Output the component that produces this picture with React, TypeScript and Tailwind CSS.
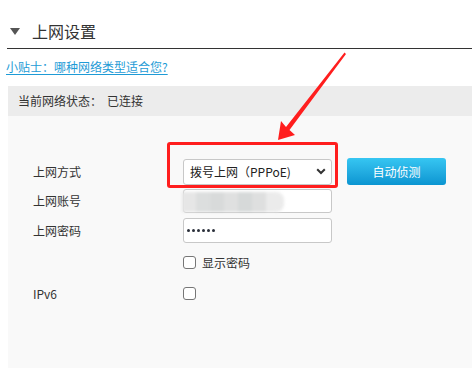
import React from "react";

export default function App() {
  return (
    <div
      className="relative w-[472px] h-[368px] overflow-hidden bg-white text-[#333] flex flex-col"
      style={{ fontFamily: '"Noto Sans CJK SC", "Noto Sans", sans-serif' }}
    >
      {/* Header */}
      <div className="ml-[7px] h-[49px] pt-[14px] border-b border-[#333] flex items-center">
        <div className="ml-[3px] w-0 h-0 border-l-[5px] border-r-[5px] border-t-[7px] border-l-transparent border-r-transparent border-t-[#555]" />
        <span className="ml-[12px] text-[16px] leading-[22px] text-[#333]">上网设置</span>
      </div>

      {/* Tip link */}
      <div className="ml-[6px] mt-[10px] h-[16px] flex items-center">
        <a className="text-[12px] leading-[16px] text-[#1e9bd6] underline underline-offset-2 decoration-[#1e9bd6]">
          小贴士：哪种网络类型适合您?
        </a>
      </div>

      {/* Status bar */}
      <div className="ml-[8px] mt-[11px] h-[30px] bg-[#ececec] flex items-center pl-[10px] text-[12px] text-[#333]">
        <span>当前网络状态：</span>
        <span className="ml-[5px]">已连接</span>
      </div>

      {/* Panel */}
      <div className="ml-[8px] flex-1 bg-[#f9f9f9] pt-[42px] text-[12px]">
        {/* 上网方式 */}
        <div className="flex items-center h-[27px]">
          <div className="w-[175px] pl-[25px]">上网方式</div>
          <div className="w-[149px] h-[26px] bg-white border border-[#c8c8c8] rounded-[3px] flex items-center pl-[6px] pr-[4px] text-[12px] text-[#222]">
            <span className="flex-1">拨号上网（PPPoE)</span>
            <svg width="10" height="7" viewBox="0 0 10 7" className="mr-[1px]">
              <path d="M1.2 1.2 L5 5 L8.8 1.2" fill="none" stroke="#333" strokeWidth="2" />
            </svg>
          </div>
          <div className="ml-[15px] w-[99px] h-[27px] rounded-[3px] bg-gradient-to-b from-[#36c6f2] to-[#0a95d1] flex items-center justify-center text-white text-[12px]">
            自动侦测
          </div>
        </div>

        {/* 上网账号 */}
        <div className="flex items-center h-[24px] mt-[4px]">
          <div className="w-[175px] pl-[25px]">上网账号</div>
          <div className="relative w-[149px] h-[24px] bg-white border border-[#c8c8c8] rounded-[3px]">
            <div className="absolute left-[-2px] top-[2px] w-[102px] h-[20px] flex blur-[1.5px]">
              <div className="w-[14px] h-full bg-[#e6e6e6]" />
              <div className="w-[14px] h-full bg-[#dcdede]" />
              <div className="w-[14px] h-full bg-[#d8dada]" />
              <div className="w-[14px] h-full bg-[#dfe0e0]" />
              <div className="w-[14px] h-full bg-[#d6d9d9]" />
              <div className="w-[14px] h-full bg-[#dedfdf]" />
              <div className="w-[18px] h-full bg-[#ebebeb] rounded-r-[8px]" />
            </div>
          </div>
        </div>

        {/* 上网密码 */}
        <div className="flex items-center h-[25px] mt-[5px]">
          <div className="w-[175px] pl-[25px]">上网密码</div>
          <div className="w-[149px] h-[25px] bg-white border border-[#c8c8c8] rounded-[3px] flex items-center pl-[3px] gap-[2px]">
            <div className="w-[3px] h-[3px] rounded-full bg-[#2a2f3a]" />
            <div className="w-[3px] h-[3px] rounded-full bg-[#2a2f3a]" />
            <div className="w-[3px] h-[3px] rounded-full bg-[#2a2f3a]" />
            <div className="w-[3px] h-[3px] rounded-full bg-[#2a2f3a]" />
            <div className="w-[3px] h-[3px] rounded-full bg-[#2a2f3a]" />
            <div className="w-[3px] h-[3px] rounded-full bg-[#2a2f3a]" />
          </div>
        </div>

        {/* 显示密码 */}
        <div className="flex items-center h-[13px] mt-[13px]">
          <div className="w-[175px]" />
          <div className="w-[13px] h-[13px] border border-[#767676] rounded-[3px] bg-white" />
          <span className="ml-[6px] leading-[13px]">显示密码</span>
        </div>

        {/* IPv6 */}
        <div className="flex items-center h-[13px] mt-[18px]">
          <div className="w-[175px] pl-[25px]">IPv6</div>
          <div className="w-[13px] h-[13px] border border-[#767676] rounded-[3px] bg-white" />
        </div>
      </div>

      {/* Red highlight box */}
      <div className="absolute left-[167px] top-[142px] w-[171px] h-[46px] border-[3px] border-[#ff1e1e] rounded-[3px] pointer-events-none" />

      {/* Red arrow */}
      <svg className="absolute left-0 top-0 pointer-events-none" width="472" height="368" viewBox="0 0 472 368">
        <polygon
          points="278,140 281,121 286,127 344.5,52.5 346,54 289.5,130 295,135"
          fill="#ff1e1e"
        />
      </svg>
    </div>
  );
}
